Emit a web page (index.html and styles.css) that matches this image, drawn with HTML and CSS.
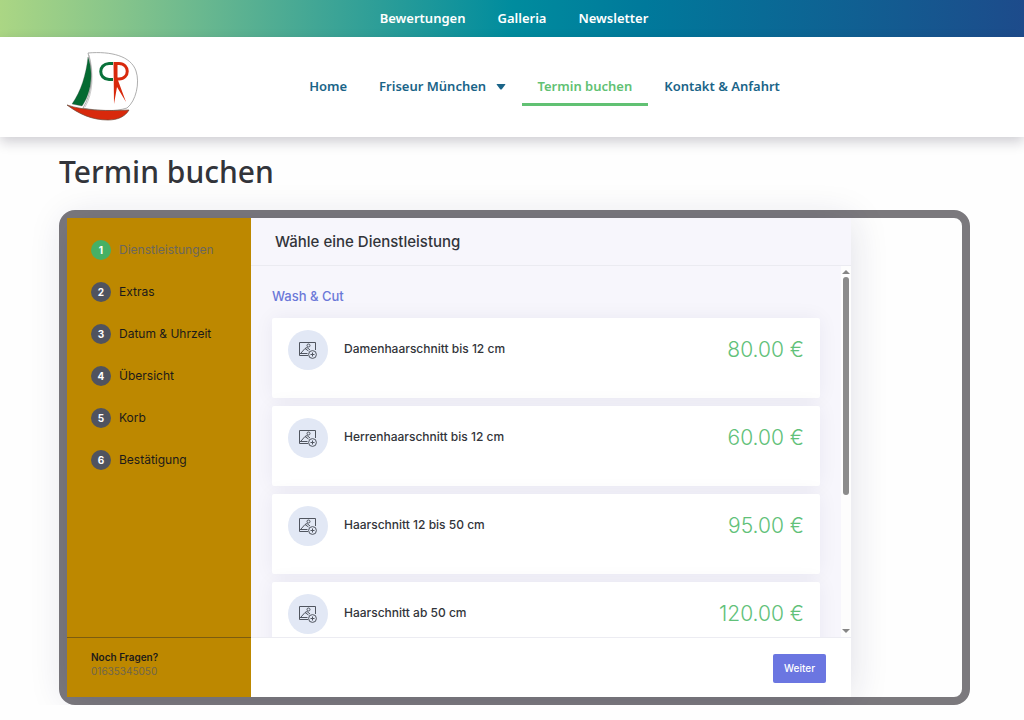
FILE: index.html
```html
<!DOCTYPE html>
<html lang="de">

<head>
    <meta charset="UTF-8">
    <meta name="viewport" content="width=device-width, initial-scale=1.0">
    <title>Termin buchen</title>
    <link rel="stylesheet" href="styles.css">
</head>

<body>
    <nav class="topbar">
        <a href="#">Bewertungen</a>
        <a href="#">Galleria</a>
        <a href="#">Newsletter</a>
    </nav>

    <header class="header">
        <a class="logo" href="#" aria-label="Startseite">
            <svg width="72" height="72" viewBox="0 0 72 72" fill="none">
                <path d="M21 2C44 0 64 5 69 20C73 32 69 50 60 57C48 61 31 60 16 57C25 43 27 21 21 2Z" stroke="#999" stroke-width=".8" />
                <path d="M22 4C27 22 26 43 18 56" stroke="#aaa" stroke-width=".6" />
                <path d="M21 6C19 24 14 40 5 53L15 55C24 43 27 22 21 6Z" fill="#046a32" stroke="#555" stroke-width=".3" />
                <path d="M0 54C17 60 43 60 62 59C58 66 50 69 41 69C25 69 12 63 0 54Z" fill="#d8290c" stroke="#6b4a3a" stroke-width=".7" />
                <path d="M46 12.500H42C31 13 31 28 42 28.500H46" stroke="#08713a" stroke-width="3" />
                <path d="M48 12.500H52C63 12.500 63 28 52 28H49" stroke="#d8290c" stroke-width="3" />
                <path d="M46.500 11H50.500V28L59 51L50 36L47 53Z" fill="#d8290c" />
            </svg>
        </a>
        <nav class="menu">
            <a href="#">Home</a>
            <a href="#">Friseur München
                <svg class="caret" width="10" height="6" viewBox="0 0 10 6"><path d="M1 0H9Q10 0 9 1L6 5Q5 6 4 5L1 1Q0 0 1 0Z" fill="currentColor" /></svg>
            </a>
            <a class="active" href="#">Termin buchen</a>
            <a href="#">Kontakt &amp; Anfahrt</a>
        </nav>
    </header>

    <main class="content">
        <h1 class="title">Termin buchen</h1>

        <div class="frame">
            <div class="booking">
                <aside class="sidebar">
                    <ol class="steps">
                        <li class="current"><span class="number">1</span>Dienstleistungen</li>
                        <li><span class="number">2</span>Extras</li>
                        <li><span class="number">3</span>Datum &amp; Uhrzeit</li>
                        <li><span class="number">4</span>Übersicht</li>
                        <li><span class="number">5</span>Korb</li>
                        <li><span class="number">6</span>Bestätigung</li>
                    </ol>
                    <div class="questions">
                        <strong>Noch Fragen?</strong>
                        <a href="tel:01635345050">01635345050</a>
                    </div>
                </aside>

                <section class="panel">
                    <h2 class="panel-title">Wähle eine Dienstleistung</h2>

                    <div class="scroll-area">
                        <div class="services">
                            <h3 class="category">Wash &amp; Cut</h3>
                            <div class="service">
                                <span class="thumb"><svg width="18" height="17"><use href="#picture" /></svg></span>
                                <span class="name">Damenhaarschnitt bis 12 cm</span>
                                <span class="price">80.00 €</span>
                            </div>
                            <div class="service">
                                <span class="thumb"><svg width="18" height="17"><use href="#picture" /></svg></span>
                                <span class="name">Herrenhaarschnitt bis 12 cm</span>
                                <span class="price">60.00 €</span>
                            </div>
                            <div class="service">
                                <span class="thumb"><svg width="18" height="17"><use href="#picture" /></svg></span>
                                <span class="name">Haarschnitt 12 bis 50 cm</span>
                                <span class="price">95.00 €</span>
                            </div>
                            <div class="service">
                                <span class="thumb"><svg width="18" height="17"><use href="#picture" /></svg></span>
                                <span class="name">Haarschnitt ab 50 cm</span>
                                <span class="price">120.00 €</span>
                            </div>
                        </div>
                        <div class="scrollbar">
                            <svg width="8" height="4" viewBox="0 0 8 4"><path d="M0 4L4 0L8 4Z" fill="#858585" /></svg>
                            <div class="scroll-thumb"></div>
                            <svg class="down" width="8" height="4" viewBox="0 0 8 4"><path d="M0 0L4 4L8 0Z" fill="#858585" /></svg>
                        </div>
                    </div>

                    <div class="actions">
                        <button class="btn" type="button">Weiter</button>
                    </div>
                </section>
            </div>
        </div>
    </main>

    <svg width="0" height="0" class="sprite">
        <symbol id="picture" viewBox="0 0 18 17">
            <g fill="none" stroke="#50555f" stroke-width="1">
                <path d="M9 13.500H.5V.5H16.500V8M1 11.500H8.500M2 11L6 6.500L9.500 9M6 6.500L8 5.500L11 8" />
                <circle cx="9.500" cy="3.500" r="1.500" />
                <circle cx="13.500" cy="12.500" r="3.900" />
                <path d="M11.500 12.500H15.500M13.500 10.500V14.500" />
            </g>
        </symbol>
    </svg>
</body>

</html>
```
FILE: styles.css
```css
* {
    box-sizing: border-box;
}

body {
    margin: 0;
    background-color: #fefefe;
    font-family: "Noto Sans", sans-serif;
    color: #32343a;
    overflow: hidden;
}

a {
    text-decoration: none;
    color: inherit;
}

.topbar {
    display: flex;
    justify-content: center;
    align-items: center;
    gap: 32px;
    height: 37px;
    padding: 0 0 2px 4px;
    background: linear-gradient(90deg, #abd684 0%, #85c48b 12%, #41a695 31%, #008c9e 50%, #00799b 63%, #1d4b8b 100%);
    color: #fff;
    font-size: 13px;
    font-weight: 600;
}

.header {
    display: flex;
    align-items: center;
    height: 100px;
    padding: 0 74px 0 67px;
    background-color: #fff;
    box-shadow: 0 5px 12px rgba(20, 15, 40, 0.2);
}

.logo svg {
    display: block;
}

.menu {
    display: flex;
    flex: 1;
    justify-content: center;
    color: #1a6488;
    font-size: 13px;
    font-weight: 600;
    line-height: 30px;
}

.menu a {
    padding: 2px 16px 2px;
    border-bottom: 3px solid transparent;
}

.menu .active {
    color: #61c173;
    border-bottom-color: #61c173;
}

.caret {
    margin-left: 6px;
    vertical-align: middle;
}

.content {
    padding: 11px 54px 0 59px;
}

.title {
    margin: 0 0 14px;
    font-size: 30px;
    font-weight: 500;
    line-height: 48px;
}

.frame {
    border: 8px solid #7b797d;
    border-radius: 16px;
}

.booking {
    display: flex;
    max-width: 784px;
    height: 479px;
    font-family: Inter, sans-serif;
    background-color: #f7f6fc;
    box-shadow: 0 2px 36px rgba(30, 30, 80, 0.14);
}

.sidebar {
    display: flex;
    flex-direction: column;
    justify-content: space-between;
    width: 184px;
    background-color: #bd8800;
    color: #1c1a1a;
}

.steps {
    display: flex;
    flex-direction: column;
    gap: 22px;
    margin: 0;
    padding: 22px 24px;
    list-style: none;
    font-size: 12px;
    line-height: 20px;
}

.steps li {
    display: flex;
    gap: 8px;
}

.steps .current {
    color: #6b675e;
}

.number {
    width: 20px;
    border-radius: 50%;
    background-color: #50535f;
    color: #fff;
    font-size: 10px;
    font-weight: 700;
    text-align: center;
}

.current .number {
    background-color: #46b064;
}

.questions {
    display: flex;
    flex-direction: column;
    height: 60px;
    padding: 12px 24px;
    border-top: 1px solid #7c5c10;
    font-size: 10px;
    line-height: 14px;
}

.questions strong {
    font-weight: 600;
}

.questions a {
    color: #6f664d;
}

.panel {
    display: flex;
    flex: 1;
    flex-direction: column;
    min-width: 0;
}

.panel-title {
    margin: 0;
    padding: 0 24px;
    border-bottom: 1px solid #ebebf1;
    font-size: 15px;
    font-weight: 500;
    line-height: 47px;
}

.scroll-area {
    display: flex;
    flex: 1;
    min-height: 0;
}

.services {
    flex: 1;
    padding: 20px 21px 0;
    overflow: hidden;
}

.category {
    margin: 0 0 12px;
    color: #6b78d8;
    font-size: 13px;
    font-weight: 500;
    line-height: 20px;
}

.service {
    display: flex;
    gap: 16px;
    height: 80px;
    margin-bottom: 8px;
    padding: 12px 16px;
    background-color: #fff;
    border-radius: 2px;
    box-shadow: 0 0 20px rgba(30, 30, 80, 0.06);
}

.thumb {
    display: flex;
    align-items: center;
    justify-content: center;
    width: 40px;
    height: 40px;
    border-radius: 50%;
    background-color: #e2e8f5;
}

.name {
    flex: 1;
    font-size: 12px;
    font-weight: 500;
    line-height: 37px;
}

.price {
    color: #61c179;
    font-size: 21px;
    font-weight: 300;
    line-height: 40px;
}

.scrollbar {
    display: flex;
    flex-direction: column;
    align-items: center;
    gap: 3px;
    width: 10px;
    padding: 4px 0;
    background-color: #fdfdfd;
}

.scroll-thumb {
    width: 6px;
    height: 60%;
    border-radius: 3px;
    background-color: #8b8b8b;
}

.scrollbar .down {
    margin-top: auto;
}

.actions {
    display: flex;
    align-items: center;
    justify-content: flex-end;
    height: 60px;
    padding: 2px 25px 0;
    background-color: #fff;
    border-top: 1px solid #ececf2;
}

.btn {
    padding: 0 11px;
    border: none;
    border-radius: 2px;
    background-color: #6b76e1;
    color: #fff;
    font-family: inherit;
    font-size: 10px;
    font-weight: 500;
    line-height: 29px;
    cursor: pointer;
}

.sprite {
    display: block;
}
```
